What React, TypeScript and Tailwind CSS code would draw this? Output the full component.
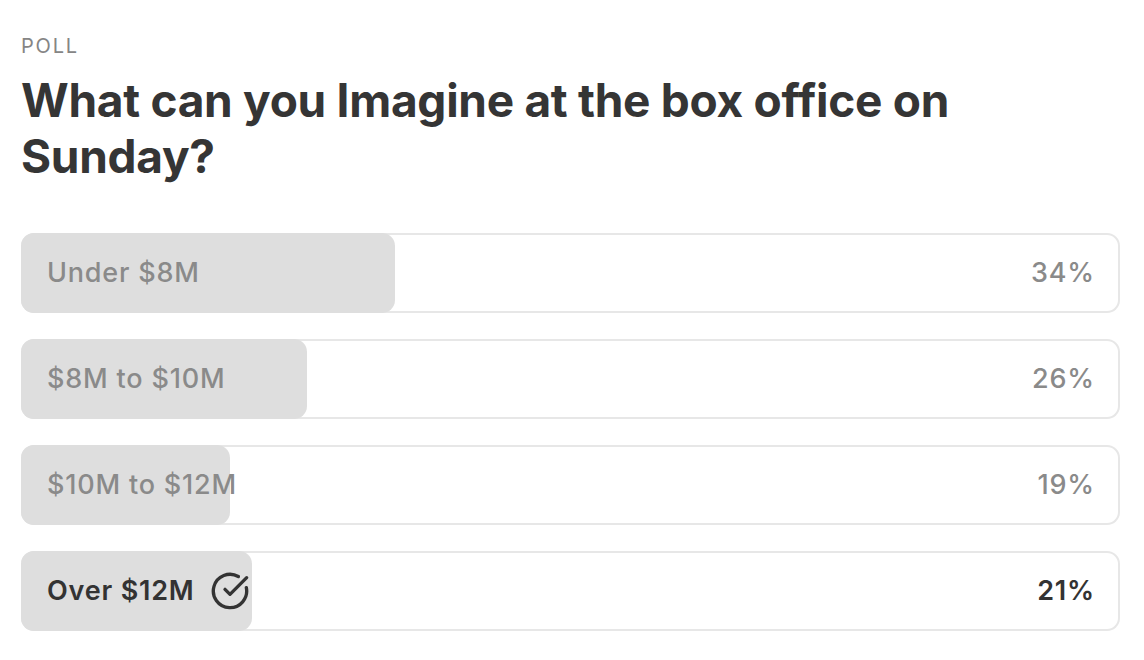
import { CircleCheckBig } from "lucide-react";

const options = [
  { label: "Under $8M", pct: 34, selected: false },
  { label: "$8M to $10M", pct: 26, selected: false },
  { label: "$10M to $12M", pct: 19, selected: false },
  { label: "Over $12M", pct: 21, selected: true },
];

export default function App() {
  return (
    <div className="min-h-screen bg-white pl-[21px] pr-[24px] pt-[34px] font-['Inter',sans-serif]">
      <div className="text-[20px] leading-[24px] tracking-[0.09em] text-[#858585]">POLL</div>
      <h1 className="mt-[14px] text-[46px] font-bold leading-[56px] tracking-[-0.006em] text-[#353535]">
        What can you Imagine at the box office on Sunday?
      </h1>
      <div className="mt-[49px] flex flex-col gap-[26px]">
        {options.map((opt) => (
          <div
            key={opt.label}
            className="relative flex h-[80px] items-center justify-between rounded-[13px] pl-[26px] pr-[26px] shadow-[inset_0_0_0_2px_#e7e7e7]"
          >
            <div
              className="absolute inset-y-0 left-0 rounded-[13px] bg-[#dedede]"
              style={{ width: `${opt.pct}%` }}
            />
            <div
              className={`relative flex items-center gap-[15px] text-[27px] tracking-[0.03em] ${
                opt.selected ? "font-semibold text-[#333333]" : "font-medium text-[#8a8a8a]"
              }`}
            >
              {opt.label}
              {opt.selected && <CircleCheckBig size={40} strokeWidth={2} className="text-[#333333]" />}
            </div>
            <div
              className={`relative -mr-[1px] text-[27px] tracking-[0.03em] ${
                opt.selected ? "font-semibold text-[#333333]" : "font-medium text-[#8a8a8a]"
              }`}
            >
              {opt.pct}%
            </div>
          </div>
        ))}
      </div>
    </div>
  );
}
